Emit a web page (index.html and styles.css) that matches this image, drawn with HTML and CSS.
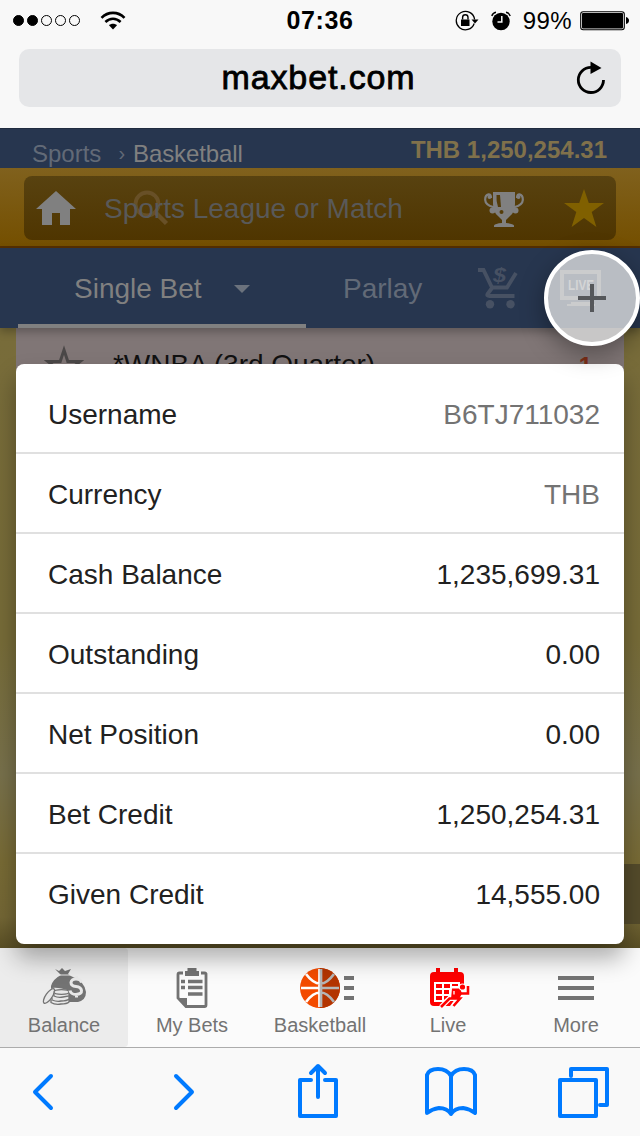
FILE: index.html
```html
<!DOCTYPE html>
<html lang="en">
<head>
  <meta charset="UTF-8">
  <meta name="viewport" content="width=device-width, initial-scale=1.0">
  <title>maxbet.com</title>
  <link rel="stylesheet" href="styles.css">
</head>
<body>
  <div class="browser-top">
    <div class="status-bar">
      <div class="status-left">
        <div class="signal">
          <span class="dot full"></span>
          <span class="dot full"></span>
          <span class="dot"></span>
          <span class="dot"></span>
          <span class="dot"></span>
        </div>
        <svg class="wifi" width="26" height="20" viewBox="0 0 26 20" fill="none" stroke="#000">
          <path d="M1.5 6.8C8 .2 18 .2 24.5 6.8" stroke-width="2.6"/>
          <path d="M5.4 11C10 6.5 16 6.5 20.6 11" stroke-width="2.5"/>
          <path d="M9 14.2C11 12.2 15 12.2 17 14.2L13 18.5Z" fill="#000" stroke="none"/>
        </svg>
      </div>
      <span class="clock">07:36</span>
      <div class="status-right">
        <svg width="24" height="22" viewBox="0 0 24 22">
          <path d="M19.2 13.5A9.2 9.2 0 1 1 19.6 9.5" fill="none" stroke="#000" stroke-width="1.3"/>
          <path d="M16.5 9.5h7L20 13.5z"/>
          <rect x="6" y="9.5" width="8.5" height="6.5"/>
          <path d="M7.6 9.5V7.5a2.7 2.7 0 0 1 5.4 0v2" fill="none" stroke="#000" stroke-width="1.4"/>
        </svg>
        <svg class="alarm" width="20" height="20" viewBox="0 0 20 20">
          <circle cx="10" cy="10.5" r="8.7"/>
          <path d="M.8 5Q1.8 1.9 5 1.3M19.2 5Q18.2 1.9 15 1.3" fill="none" stroke="#000" stroke-width="1.4"/>
          <path d="M10.8 5v6H6.5" fill="none" stroke="#f7f7f7" stroke-width="1.5"/>
        </svg>
        <span class="percent">99%</span>
        <svg width="49" height="20" viewBox="0 0 49 20">
          <rect x=".7" y=".7" width="43.6" height="18" rx="2.5" fill="none" stroke="#000" stroke-width="1.1"/>
          <rect x="2" y="2" width="41" height="15.4" rx="1"/>
          <path d="M46 6q3 1 3 3.5T46 13z"/>
        </svg>
      </div>
    </div>
    <div class="url-bar">
      <span class="url">maxbet.com</span>
      <svg class="reload" width="30" height="34" viewBox="0 0 30 34">
        <path d="M27.5 19A12.6 12.6 0 1 1 15 6.3" fill="none" stroke="#000" stroke-width="2.8"/>
        <path d="M14.5 .5v12.500L25.500 7z"/>
      </svg>
    </div>
  </div>

  <div class="app">
    <div class="crumbs">
      <span class="crumb">Sports</span>
      <span class="crumb-sep">›</span>
      <span class="crumb current">Basketball</span>
      <span class="credit">THB 1,250,254.31</span>
    </div>
    <div class="search-strip">
      <div class="search-box">
        <svg class="home" width="40" height="34" viewBox="0 0 40 34">
          <path d="M20 0L40 18H34V34H24V22H16V34H6V18H0z" fill="#808080"/>
        </svg>
        <div class="search-field">
          <svg class="magnifier" width="36" height="36" viewBox="0 0 36 36" fill="none" stroke="#685027">
            <circle cx="14" cy="14" r="11.5" stroke-width="3.8"/>
            <path d="M22 22L33.5 33.5" stroke-width="4.5"/>
          </svg>
          <span class="placeholder">Sports League or Match</span>
        </div>
        <svg class="trophy" width="40" height="36" viewBox="0 0 40 36">
          <path d="M9 0h22v12q0 8-5 12l-4 4v3q7 .5 8 2.500v1.500H10v-1.500q1-2 8-2.500v-3l-4-4Q9 20 9 12z" fill="#808080"/>
          <path d="M7 6Q7 2.300 4.500 2.300 1 3 1.200 8q.3 5 8 7v4M33 6q0-3.700 2.500-3.700Q39 3 38.800 8q-.3 5-8 7v4" fill="none" stroke="#808080" stroke-width="2.200"/>
          <g fill="#808080"><circle cx="5.500" cy="5" r="2"/><circle cx="34.500" cy="5" r="2"/><circle cx="8.500" cy="18.500" r="3"/><circle cx="31.500" cy="18.500" r="3"/></g>
          <path d="M12.500 3H16l1 12h-3Q12 9 12.500 3z" fill="#543c09"/>
          <circle cx="17.500" cy="20" r="2" fill="#543c09"/>
        </svg>
        <svg class="star" width="40" height="38" viewBox="0 0 40 38">
          <path d="M20 0l4.800 14H40L27.700 23 32.400 38 20 29 7.600 38 12.300 23 0 14h15.200z" fill="#806000"/>
        </svg>
      </div>
    </div>
    <div class="bet-tabs">
      <div class="bet-tab active">
        <span>Single Bet</span>
        <svg width="16" height="8" viewBox="0 0 16 8"><path d="M0 0h16L8 8z" fill="#6b727d"/></svg>
      </div>
      <div class="bet-tab parlay">Parlay</div>
      <svg class="cart" width="42" height="48" viewBox="0 -2 42 48">
        <path d="M0 4h5.500L14 21.500h15L38 7M14 22l-4.500 6q-1 2 2 2h25" fill="none" stroke="#475163" stroke-width="3.800"/>
        <circle cx="12" cy="38.200" r="4.200" fill="#475163"/>
        <circle cx="32.500" cy="38.200" r="4.200" fill="#475163"/>
        <text x="15" y="16" textLength="13" lengthAdjust="spacingAndGlyphs" class="cart-sign">$</text>
      </svg>
    </div>
    <div class="content">
      <div class="league">
        <svg width="40" height="38" viewBox="0 0 40 38">
          <path d="M20 5l3.800 11.500H36l-9.500 7.500 3.500 11L20 28l-10 7 3.500-11L4 16.500h12.200z" fill="none" stroke="#4b4848" stroke-width="3"/>
        </svg>
        <span class="league-name">*WNBA (3rd Quarter)</span>
        <span class="league-count">1</span>
      </div>
      <div class="side-tab"></div>
    </div>
  </div>

  <nav class="nav-bar">
    <a class="nav-item selected">
      <svg width="44" height="40" viewBox="0 0 44 40">
        <path d="M13 1l4 2 3-3 3 3 6-2-3 5q2 2 5 3 12 5 13 15 0 8-8 10H9L9 18q2-7 10-11z" fill="#737373"/>
        <path d="M17 7h11" stroke="#e8e8e8" stroke-width="1"/>
        <path d="M10 20Q17 19 27 23V36H1z" fill="#e8e8e8"/>
        <g fill="#e8e8e8" stroke="#737373" stroke-width="1.300">
          <ellipse cx="7" cy="28" rx="3.200" ry="8.700" transform="rotate(35 7 28)"/>
          <path d="M9 32v2.500q4 2.500 10 1.500 6 0 8-2v-3"/>
          <path d="M10 29v3q5 2 9 1 6 0 8-2v-4"/>
          <path d="M12 25v3q4 2 9 1l6-1v-4"/>
          <ellipse cx="19.500" cy="24" rx="7.500" ry="2.300"/>
        </g>
        <path d="M39.500 14.500q-1-3.500-5.500-3.500t-5 3.500q0 3.500 5 4t5.500 4-5.500 4q-5 0-6-4M34.500 8v3M34.500 26v3.500" fill="none" stroke="#e8e8e8" stroke-width="3"/>
      </svg>
      <span>Balance</span>
    </a>
    <a class="nav-item">
      <svg width="32" height="40" viewBox="0 0 32 40">
        <path d="M7 5H3.500Q2 5 2 6.500V30L10 38.500H28.500q1.500 0 1.500-1.500V6.500Q30.500 5 28.500 5H25" fill="none" stroke="#737373" stroke-width="2.800"/>
        <path d="M1 30h10v9z" fill="#737373"/>
        <path d="M9 3h2.500V0h9v3H23v5H9z" fill="#737373"/>
        <path d="M5 13.500h4M12 13.500h14.500M5 19.500h4M12 19.500h14.500M12 26h14.500" stroke="#737373" stroke-width="3.300"/>
      </svg>
      <span>My Bets</span>
    </a>
    <a class="nav-item">
      <svg class="ball" width="56" height="40" viewBox="0 0 56 40">
        <circle cx="20" cy="20" r="20" fill="#f34b00"/>
        <path d="M20 0a20 20 0 0 1 0 40z" fill="#b33400"/>
        <g fill="none" stroke-width="2.700">
          <path d="M19.500 1v38M1 20h19M6 6q7 9.500 14 9.500M6 34q7-9.500 14-9.500" stroke="#fff"/>
          <path d="M21 1v38M20 20h19M34 6q-7 9.500-13 9.500M34 34q-7-9.500-13-9.500" stroke="#b5b5b5"/>
        </g>
        <path d="M44 10h10M44 20h10M44 30h10" stroke="#737373" stroke-width="4"/>
      </svg>
      <span>Basketball</span>
    </a>
    <a class="nav-item">
      <svg class="live" width="40" height="40" viewBox="0 0 40 40">
        <path d="M6 0h4v4h14V0h4v4h2q4 0 4 4v11L20 38H4q-4 0-4-4V8q0-4 4-4h2z" fill="#f00"/>
        <path d="M4 14h26v8L16 34H4z" fill="#fff"/>
        <path d="M6 16h6v4H6zm8 0h6v4h-6zm8 0h6v2h-6zM6 22h6v4H6zm8 0h5v4h-5zM6 28h6v4H6zm8 0h5l-5 4z" fill="#f00"/>
        <path d="M11 39l8.500-8.500H30L23.500 38M24 22.500h5l2 3h7V18" fill="none" stroke="#fff" stroke-width="5"/>
        <path d="M11 39l8.500-8.500H30L23.500 38M31 25.500h7V18" fill="none" stroke="#f00" stroke-width="2.600"/>
        <path d="M22 20.500h8l2 5-3 5.500h-8z" fill="#f00"/>
        <path d="M24 23v3.500" stroke="#fff" stroke-width="1.300"/>
        <circle cx="32.500" cy="19" r="3.600" fill="#fff"/>
        <circle cx="32.500" cy="19" r="2.600" fill="#f00"/>
      </svg>
      <span>Live</span>
    </a>
    <a class="nav-item">
      <svg width="36" height="40" viewBox="0 0 36 40">
        <path d="M0 10h36M0 20h36M0 30h36" stroke="#737373" stroke-width="4"/>
      </svg>
      <span>More</span>
    </a>
  </nav>

  <div class="browser-bottom">
    <svg class="back" width="24" height="40" viewBox="0 0 24 40"><path d="M20 4L4 20l16 16"/></svg>
    <svg class="forward" width="24" height="40" viewBox="0 0 24 40"><path d="M4 4l16 16L4 36"/></svg>
    <svg class="share" width="44" height="56" viewBox="0 0 44 56"><path d="M15 17H4v36h36V17H29M22 34V3M15 10l7-7 7 7"/></svg>
    <svg class="book" width="54" height="52" viewBox="0 0 54 52"><path d="M27 10Q23 3 14 3T3 9v38q5-4 12-5 8 0 12 6 4-6 12-6 7 1 12 5V9Q49 3 40 3T27 10v38"/></svg>
    <svg width="52" height="52" viewBox="0 0 52 52"><path d="M2 14h36v36H2zM13 10V3h36v36h-7"/></svg>
  </div>

  <div class="account-card">
    <div class="account-row"><span>Username</span><span class="value muted">B6TJ711032</span></div>
    <div class="account-row"><span>Currency</span><span class="value muted">THB</span></div>
    <div class="account-row"><span>Cash Balance</span><span class="value">1,235,699.31</span></div>
    <div class="account-row"><span>Outstanding</span><span class="value">0.00</span></div>
    <div class="account-row"><span>Net Position</span><span class="value">0.00</span></div>
    <div class="account-row"><span>Bet Credit</span><span class="value">1,250,254.31</span></div>
    <div class="account-row"><span>Given Credit</span><span class="value">14,555.00</span></div>
  </div>

  <button class="float-btn" aria-label="Open">
    <svg width="88" height="88" viewBox="0 0 88 88">
      <path d="M14 18h37v26H14z" fill="none" stroke="#cbcccd" stroke-width="4"/>
      <path d="M23 48h20v2h4v2H19v-2h4z" fill="#cbcccd"/>
      <text x="20" y="36" textLength="26" lengthAdjust="spacingAndGlyphs" class="live-sign">LIVE</text>
      <path d="M44 30v28M30 44h28" stroke="#55575a" stroke-width="4"/>
    </svg>
  </button>
</body>
</html>
```
FILE: styles.css
```css
* {
  margin: 0;
  padding: 0;
  box-sizing: border-box;
}

body {
  position: relative;
  display: flex;
  flex-direction: column;
  width: 640px;
  height: 1136px;
  overflow: hidden;
  font-family: "Liberation Sans", Arial, sans-serif;
  background-color: #f8f8f8;
}

svg {
  display: block;
  flex-shrink: 0;
}

/* Browser top */
.browser-top {
  height: 128px;
  background-color: #f8f8f8;
}

.status-bar {
  display: grid;
  grid-template-columns: 1fr auto 1fr;
  align-items: center;
  height: 41px;
  padding: 0 11px 0 13px;
}

.status-left,
.signal,
.status-right {
  display: flex;
  align-items: center;
}

.signal {
  gap: 3px;
}

.dot {
  width: 11px;
  height: 11px;
  border: 1px solid #000;
  border-radius: 50%;
}

.dot.full {
  background-color: #000;
}

.wifi {
  margin-left: 20px;
}

.clock {
  margin-right: 2px;
  font-size: 25px;
  font-weight: bold;
  letter-spacing: 0.6px;
}

.status-right {
  justify-content: flex-end;
}

.alarm {
  margin-left: 12px;
}

.percent {
  margin: 0 8px 0 12px;
  font-size: 24px;
  letter-spacing: 0.4px;
}

.url-bar {
  display: flex;
  align-items: center;
  height: 58px;
  margin: 8px 19px 0;
  padding-right: 15px;
  border-radius: 10px;
  background-color: #e5e6e8;
}

.reload {
  margin-bottom: 1px;
}

.url {
  flex: 1;
  padding: 0 0 2px 42px;
  font-size: 34px;
  letter-spacing: 0.9px;
  text-align: center;
  -webkit-text-stroke: 0.8px #000;
}

/* App header, dimmed behind the account card */
.app {
  display: flex;
  flex-direction: column;
  height: 820px;
}

.crumbs {
  display: flex;
  align-items: center;
  height: 40px;
  padding: 0 33px 0 32px;
  border-top: 1px solid #1f2b3f;
  background-color: #27364f;
  color: #626a77;
  font-size: 24px;
}

.crumb {
  padding-top: 10px;
}

.crumb-sep {
  margin: 0 8px 0 17px;
  padding-top: 10px;
  font-size: 20px;
}

.current {
  color: #808080;
  letter-spacing: -0.1px;
}

.credit {
  margin-left: auto;
  padding-top: 2px;
  color: #80714b;
  font-weight: bold;
}

.search-strip {
  height: 80px;
  padding: 8px 24px;
  border-bottom: 2px solid #552f00;
  background: linear-gradient(#80611d, #744f00);
}

.search-box {
  display: flex;
  align-items: center;
  height: 64px;
  padding: 0 12px;
  border-radius: 8px;
  background: linear-gradient(#584210, #4f3500);
}

.search-field {
  position: relative;
  margin-left: 28px;
  padding-top: 2px;
  width: 352px;
}

.magnifier {
  position: absolute;
  left: 29px;
  top: -1px;
}

.placeholder {
  position: relative;
  color: #595959;
  font-size: 28px;
}

.trophy {
  margin: 3px 0 0 28px;
}

.star {
  margin-left: 40px;
}

.bet-tabs {
  display: flex;
  align-items: center;
  height: 80px;
  padding-left: 18px;
  background-color: #27364f;
  box-shadow: 0 4px 8px rgba(0, 0, 0, 0.25);
  z-index: 1;
}

.bet-tab {
  color: #626a77;
  font-size: 28px;
}

.bet-tab.active {
  display: flex;
  align-items: center;
  gap: 32px;
  width: 288px;
  height: 80px;
  padding: 6px 0 0 56px;
  border-bottom: 4px solid #808080;
  color: #808080;
}

.parlay {
  margin-left: 37px;
  padding-top: 2px;
  width: 135px;
}

.cart-sign {
  fill: #475163;
  font-size: 21px;
  font-style: italic;
  font-weight: bold;
}

.content {
  position: relative;
  flex: 1;
  padding: 0 16px;
  background: linear-gradient(#786c3a, #776c38 50%, #78714c 72%, #786b35 86%, #746735 95%, #5a4f25);
}

.league {
  display: flex;
  align-items: center;
  height: 80px;
  padding: 0 32px 8px 28px;
  background-color: #807676;
}

.league-name {
  flex: 1;
  margin-left: 29px;
  padding-top: 2px;
  font-size: 28px;
  letter-spacing: -0.05px;
  color: #111;
}

.league-count {
  padding-top: 4px;
  color: #803018;
  font-size: 24px;
  font-weight: bold;
}

.side-tab {
  position: absolute;
  right: 0;
  bottom: 24px;
  width: 24px;
  height: 60px;
  background-color: #544b2b;
}

/* App navigation */
.nav-bar {
  display: grid;
  grid-template-columns: repeat(5, 1fr);
  height: 100px;
  border-bottom: 1px solid #acacac;
  background-color: #fbfbfb;
}

.nav-item {
  display: flex;
  flex-direction: column;
  align-items: center;
  gap: 6px;
  padding-top: 20px;
  color: #737373;
  font-size: 20px;
}

.selected {
  border-radius: 0 4px 4px 0;
  background-color: #ececec;
}

.ball {
  margin-left: 16px;
}

.live {
  margin-left: 4px;
}

/* Browser toolbar */
.browser-bottom {
  display: flex;
  align-items: center;
  height: 88px;
  padding-left: 31px;
  background-color: #f9f9f9;
}

.browser-bottom path {
  fill: none;
  stroke: #007aff;
  stroke-width: 4;
  stroke-linecap: round;
  stroke-linejoin: round;
}

.forward {
  margin-left: 117px;
}

.share {
  margin: 0 84px 2px 100px;
}

.book {
  margin-right: 80px;
}

/* Account card */
.account-card {
  position: absolute;
  left: 16px;
  top: 364px;
  width: 608px;
  height: 580px;
  padding-top: 10px;
  border-radius: 8px;
  background-color: #fff;
  box-shadow: 0 14px 24px rgba(0, 0, 0, 0.32);
  z-index: 2;
}

.account-row {
  display: flex;
  align-items: center;
  justify-content: space-between;
  height: 80px;
  padding: 4px 24px 0 32px;
  border-bottom: 2px solid #e0e0e0;
  color: #212121;
  font-size: 28px;
}

.account-row:last-child {
  padding-top: 2px;
  border-bottom: none;
}

.muted {
  color: #737373;
}

.float-btn {
  position: absolute;
  left: 544px;
  top: 250px;
  width: 96px;
  height: 96px;
  border: 4px solid #fff;
  border-radius: 50%;
  background: linear-gradient(#b9bdc3 74px, #c8c7c7 74px);
  box-shadow: 0 8px 24px rgba(0, 0, 0, 0.35);
  z-index: 3;
}

.live-sign {
  fill: #d4d5d6;
  font-size: 14px;
  font-weight: bold;
}
```
